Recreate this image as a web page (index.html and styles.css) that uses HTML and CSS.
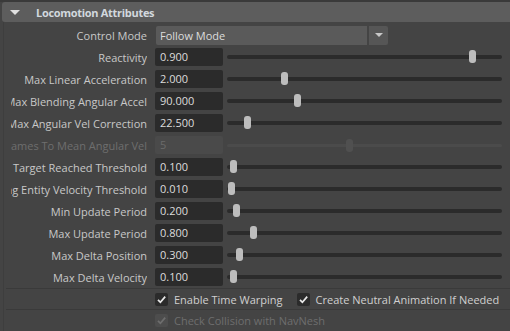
FILE: index.html
```html
<!DOCTYPE html>
<html lang="en">
<head>
  <meta charset="UTF-8" />
  <title>Locomotion Attributes</title>
  <link rel="stylesheet" href="styles.css">
</head>
<body>
  <div class="frame">
    <div class="frame-header">
      <span class="caret"></span>
      <span class="frame-title">Locomotion Attributes</span>
    </div>
    <div class="frame-body">
      <div class="row">
        <div class="label"><span>Control Mode</span></div>
        <div class="combo">
          <div class="combo-value">Follow Mode</div>
          <div class="combo-btn"><span class="combo-arrow"></span></div>
        </div>
      </div>

      <div class="row">
        <div class="label"><span>Reactivity</span></div>
        <div class="field">0.900</div>
        <div class="track"><span class="handle" style="left: 89.1%"></span></div>
      </div>
      <div class="row">
        <div class="label"><span>Max Linear Acceleration</span></div>
        <div class="field">2.000</div>
        <div class="track"><span class="handle" style="left: 20.9%"></span></div>
      </div>
      <div class="row">
        <div class="label"><span>Max Blending Angular Accel</span></div>
        <div class="field">90.000</div>
        <div class="track"><span class="handle" style="left: 25.8%"></span></div>
      </div>
      <div class="row">
        <div class="label"><span>Max Angular Vel Correction</span></div>
        <div class="field">22.500</div>
        <div class="track"><span class="handle" style="left: 7.3%"></span></div>
      </div>
      <div class="row disabled">
        <div class="label"><span>Num Frames To Mean Angular Vel</span></div>
        <div class="field">5</div>
        <div class="track"><span class="handle" style="left: 44.7%"></span></div>
      </div>
      <div class="row">
        <div class="label"><span>Target Reached Threshold</span></div>
        <div class="field">0.100</div>
        <div class="track"><span class="handle" style="left: 2.4%"></span></div>
      </div>
      <div class="row">
        <div class="label"><span>Following Entity Velocity Threshold</span></div>
        <div class="field">0.010</div>
        <div class="track"><span class="handle" style="left: 1.5%"></span></div>
      </div>
      <div class="row">
        <div class="label"><span>Min Update Period</span></div>
        <div class="field">0.200</div>
        <div class="track"><span class="handle" style="left: 3.5%"></span></div>
      </div>
      <div class="row">
        <div class="label"><span>Max Update Period</span></div>
        <div class="field">0.800</div>
        <div class="track"><span class="handle" style="left: 9.5%"></span></div>
      </div>
      <div class="row">
        <div class="label"><span>Max Delta Position</span></div>
        <div class="field">0.300</div>
        <div class="track"><span class="handle" style="left: 4.4%"></span></div>
      </div>
      <div class="row">
        <div class="label"><span>Max Delta Velocity</span></div>
        <div class="field">0.100</div>
        <div class="track"><span class="handle" style="left: 2.2%"></span></div>
      </div>

      <div class="sep"></div>
      <div class="check-row">
        <label class="check">
          <span class="box"><svg width="13" height="13" viewBox="0 0 13 13"><path d="M3 6.8 L5.4 9.3 L10.2 3.6" /></svg></span>
          Enable Time Warping
        </label>
        <label class="check">
          <span class="box"><svg width="13" height="13" viewBox="0 0 13 13"><path d="M3 6.8 L5.4 9.3 L10.2 3.6" /></svg></span>
          Create Neutral Animation If Needed
        </label>
      </div>
      <div class="sep"></div>
      <div class="check-row disabled">
        <label class="check">
          <span class="box"><svg width="13" height="13" viewBox="0 0 13 13"><path d="M3 6.8 L5.4 9.3 L10.2 3.6" /></svg></span>
          Check Collision with NavNesh
        </label>
      </div>
    </div>
  </div>
</body>
</html>
```

FILE: styles.css
```css
* { margin: 0; padding: 0; box-sizing: border-box; }
body {
  background: #444444;
  font-family: 'Open Sans', sans-serif;
  font-size: 11px;
  color: #c8c8c8;
  border-top: 2px solid #3a3a3a;
  height: 331px;
  overflow: hidden;
}
.frame { padding-left: 2px; }
.frame-header {
  height: 20px;
  background: #5d5d5d;
  border-radius: 3px 0 0 3px;
  display: flex;
  align-items: center;
}
.caret {
  width: 0; height: 0;
  margin-left: 8px;
  border-left: 5px solid transparent;
  border-right: 5px solid transparent;
  border-top: 5px solid #e0e0e0;
}
.frame-title {
  margin-left: 16px;
  font-weight: 700;
  letter-spacing: -0.3px;
  color: #d2d8de;
}
.frame-body {
  border-left: 1px solid #3e3e3e;
  margin-left: 1px;
  padding-top: 2px;
  height: 309px;
}
.row {
  height: 22px;
  display: flex;
  align-items: center;
}
.label {
  width: 136px;
  margin-left: 7px;
  flex-shrink: 0;
  display: flex;
  justify-content: flex-end;
  overflow: hidden;
  white-space: nowrap;
}
.label span { flex-shrink: 0; }
.field {
  margin-left: 8px;
  width: 68px;
  height: 18px;
  line-height: 18px;
  padding-left: 5px;
  background: #2b2b2b;
  border-radius: 2px;
  color: #dcdcdc;
}
.track {
  position: relative;
  margin-left: 4px;
  width: 275px;
  height: 4px;
  border-radius: 2px;
  background: #2b2b2b;
}
.handle {
  position: absolute;
  top: -5px;
  width: 7px;
  height: 13px;
  margin-left: -3.5px;
  border-radius: 3px;
  background: #bdbdbd;
}
.row.disabled .label { color: #6e6e6e; }
.row.disabled .field { background: #4a4a4a; color: #6a6a6a; }
.row.disabled .track { background: #4b4b4b; height: 3px; }
.row.disabled .handle { background: #505050; }

.combo {
  margin-left: 9px;
  display: flex;
  gap: 2px;
  height: 19px;
}
.combo-value {
  width: 211px;
  background: #5a5a5a;
  border-radius: 2px 0 0 2px;
  padding-left: 4px;
  line-height: 19px;
  color: #dcdcdc;
}
.combo-btn {
  width: 19px;
  background: #565656;
  border-radius: 0 2px 2px 0;
  display: flex;
  align-items: center;
  justify-content: center;
}
.combo-arrow {
  width: 0; height: 0;
  border-left: 4px solid transparent;
  border-right: 4px solid transparent;
  border-top: 4px solid #c8c8c8;
}

.sep {
  margin-left: 2px;
  height: 1px;
  background: #3a3a3a;
}
.check-row {
  height: 20px;
  display: flex;
  align-items: center;
  gap: 14px;
  padding-left: 151px;
}
.check {
  display: flex;
  align-items: center;
  gap: 6px;
  color: #d0d0d0;
}
.box {
  width: 13px;
  height: 13px;
  border-radius: 2px;
  background: #2b2b2b;
  display: flex;
}
.box path {
  fill: none;
  stroke: #e8e8e8;
  stroke-width: 1.7;
}
.check-row.disabled .check { color: #6e6e6e; }
.check-row.disabled .box { background: #4d4d4d; }
.check-row.disabled .box path { stroke: #6e6e6e; }
```
